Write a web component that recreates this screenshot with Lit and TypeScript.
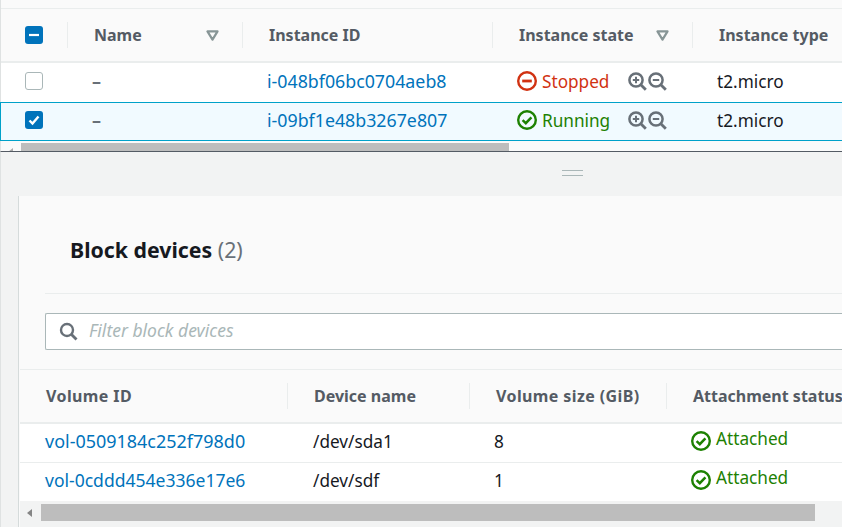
import { LitElement, css, html, svg } from "lit";
import { customElement } from "lit/decorators.js";

const stopped = html`<svg class="ico" viewBox="0 0 20 20" fill="none" stroke="#d13212" stroke-width="2.4">
  <circle cx="10" cy="10" r="8.8"></circle><path d="M5.2 10h9.6" stroke-width="2.8"></path></svg>`;
const okIcon = html`<svg class="ico" viewBox="0 0 20 20" fill="none" stroke="#1d8102" stroke-width="2.4">
  <circle cx="10" cy="10" r="8.8"></circle><path d="M5.6 10.2l3.2 3 5.6-5.8" stroke-width="2.5"></path></svg>`;

const lens = (plus: boolean) => html`<svg class="zoom" viewBox="0 0 19 19" fill="none" stroke="#687078" stroke-width="2.5">
  <circle cx="8" cy="8" r="6.6"></circle><path d="M12.8 12.8l5 5" stroke-width="2.8"></path>
  <path d="M4.8 8h6.4" stroke-width="2"></path>
  ${plus ? svg`<path d="M8 4.8v6.4" stroke-width="2"></path>` : ""}</svg>`;

const sortIcon = html`<svg class="sort" viewBox="0 0 14 12"><path d="M1.5 1.5h11L7 10.5z" fill="none" stroke="#879596" stroke-width="2.4" stroke-linejoin="round"></path></svg>`;

const instances = [
  { id: "i-048bf06bc0704aeb8", state: "Stopped", selected: false },
  { id: "i-09bf1e48b3267e807", state: "Running", selected: true },
];

const volumes = [
  { id: "vol-0509184c252f798d0", device: "/dev/sda1", size: "8", idSize: 17.98 },
  { id: "vol-0cddd454e336e17e6", device: "/dev/sdf", size: "1", idSize: 17.54 },
];

@customElement("app-root")
export class AppRoot extends LitElement {
  static styles = css`
    :host {
      display: block;
      width: 842px;
      height: 527px;
      overflow: hidden;
      background: #f2f3f3;
      font-family: "Noto Sans", "Open Sans", sans-serif;
      font-size: 17.2px;
      color: #16191f;
    }
    .top {
      height: 152px;
      background: #fafafa;
      border-bottom: 1px solid #545b64;
      border-left: 1px solid #dfe2e2;
      padding-top: 8px;
      box-sizing: border-box;
    }
    .lower {
      border-left: 1px solid #dfe2e2;
    }
    .grid-top {
      display: grid;
      grid-template-columns: 66px 175px 250px 200px 150px;
      align-items: center;
    }
    .grid-bottom {
      display: grid;
      grid-template-columns: 267px 182px 197px 176px;
      align-items: center;
    }
    .head {
      height: 55px;
      background: #fafafa;
      border-top: 1px solid #eaeded;
      border-bottom: 2px solid #eaeded;
      box-sizing: border-box;
      font-size: 16px;
      font-weight: 700;
      color: #545b64;
      white-space: nowrap;
    }
    .hcell {
      display: flex;
      align-items: center;
      justify-content: space-between;
      height: 26px;
      padding: 0 23px 0 26px;
      border-left: 1px solid #eaeded;
      overflow: hidden;
    }
    .hcell.first {
      border-left: 0;
      padding: 0 0 0 24px;
    }
    .wide {
      letter-spacing: 0.4px;
    }
    .row {
      height: 39px;
      background: #fff;
      padding-bottom: 3px;
      box-sizing: border-box;
      white-space: nowrap;
    }
    .row.selected {
      margin-left: -1px;
      background: #f1faff;
      border: 1px solid #00a1c9;
      border-right: 0;
    }
    .cell {
      padding-left: 25px;
      display: flex;
      align-items: center;
    }
    .cell.first {
      padding-left: 24px;
    }
    a {
      color: #0073bb;
      font-size: 17.8px;
      text-decoration: none;
    }
    .box {
      width: 18px;
      height: 18px;
      border-radius: 3px;
      box-sizing: border-box;
      background: #0073bb;
      display: flex;
      align-items: center;
      justify-content: center;
    }
    .box.off {
      background: #fff;
      border: 1px solid #aab7b8;
    }
    .box svg {
      width: 14px;
      height: 14px;
    }
    .dash {
      color: #687078;
      font-size: 18px;
      font-weight: 700;
    }
    .ico {
      width: 20px;
      height: 20px;
      flex: none;
      margin-right: 5px;
    }
    .zoom {
      width: 19px;
      height: 19px;
      flex: none;
      margin-right: 1px;
    }
    .sort {
      width: 13px;
      height: 11px;
      flex: none;
    }
    .state {
      width: 86px;
    }
    .stopped {
      color: #d13212;
    }
    .ok {
      color: #1d8102;
    }
    .bar {
      display: flex;
      align-items: flex-start;
      height: 10px;
      padding-top: 2px;
      background: #fafafa;
      box-sizing: border-box;
      overflow: hidden;
    }
    .bar b {
      flex: none;
      width: 0;
      height: 0;
      margin: 5px 0 0 7px;
      border: 4px solid transparent;
      border-left: 0;
      border-right: 5px solid #aaa;
    }
    .thumb {
      height: 8px;
      background: #bdbdbd;
    }
    .handle {
      height: 44px;
      display: flex;
      align-items: center;
      justify-content: center;
      padding: 0 0 2px 301px;
      box-sizing: border-box;
    }
    .handle i {
      display: block;
      width: 21px;
      height: 4px;
      border-top: 1px solid #aab7b8;
      border-bottom: 1px solid #aab7b8;
    }
    .panel {
      margin-left: 17px;
      height: 331px;
      background: #fafafa;
      border-left: 1px solid #d5dbdb;
      padding-left: 1px;
      box-sizing: border-box;
    }
    .panel-head {
      margin-left: 25px;
      height: 98px;
      border-bottom: 1px solid #eaeded;
      box-sizing: border-box;
      display: flex;
      align-items: center;
      padding: 11px 0 0 25px;
    }
    h2 {
      margin: 0;
      font-size: 21.3px;
      font-weight: 700;
      line-height: 28px;
      white-space: nowrap;
    }
    h2 span {
      font-weight: 400;
      color: #687078;
    }
    .filter {
      margin: 19px 0 19px 25px;
      height: 37px;
      background: #fff;
      border: 1px solid #aab7b8;
      border-right: 0;
      border-radius: 2px 0 0 2px;
      box-sizing: border-box;
      display: flex;
      align-items: center;
      padding-left: 13px;
      gap: 11px;
      font-size: 17.5px;
      font-style: italic;
      color: #aab7b8;
    }
    .filter span {
      margin-top: -3px;
    }
    .filter svg {
      width: 19px;
      height: 19px;
    }
    .b-row {
      height: 39px;
      background: #fff;
      border-bottom: 1px solid #eaeded;
      padding-bottom: 4px;
      box-sizing: border-box;
      white-space: nowrap;
    }
    .b-row.last {
      height: 38px;
      border-bottom: 0;
    }
    .b-row .cell {
      padding-left: 26px;
    }
    .b-row .cell.first {
      padding-left: 25px;
    }
    .b-row .cell.size {
      padding-left: 25px;
    }
    .b-row .cell.status {
      padding-left: 25px;
    }
    .b-row .status span {
      margin-top: -5px;
    }
    .b-bar {
      display: flex;
      height: 26px;
      background: #f2f3f3;
      padding-top: 3px;
      box-sizing: border-box;
    }
    .b-bar .arrow {
      width: 21px;
      height: 17px;
      display: flex;
      align-items: center;
      padding-left: 7px;
      box-sizing: border-box;
    }
    .b-bar .arrow b {
      border: 4px solid transparent;
      border-left: 0;
      border-right: 5px solid #858585;
    }
    .b-bar .thumb {
      height: 17px;
      width: 774px;
    }
  `;

  render() {
    return html`
      <div class="top">
        <div class="grid-top head">
          <div class="hcell first">
            <div class="box">
              <svg viewBox="0 0 14 14"><path d="M2 7h10" stroke="#fff" stroke-width="2.2"></path></svg>
            </div>
          </div>
          <div class="hcell">Name ${sortIcon}</div>
          <div class="hcell">Instance ID</div>
          <div class="hcell">Instance state ${sortIcon}</div>
          <div class="hcell">Instance type</div>
        </div>
        ${instances.map(
          (r) => html`<div class="grid-top row ${r.selected ? "selected" : ""}">
            <div class="cell first">
              ${r.selected
                ? html`<div class="box">
                    <svg viewBox="0 0 14 14" fill="none"><path d="M2.5 7.5l3 3 6-7" stroke="#fff" stroke-width="2.4"></path></svg>
                  </div>`
                : html`<div class="box off"></div>`}
            </div>
            <div class="cell"><span class="dash">–</span></div>
            <div class="cell"><a href="#">${r.id}</a></div>
            <div class="cell">
              ${r.state === "Stopped" ? stopped : okIcon}
              <span class="state ${r.state === "Stopped" ? "stopped" : "ok"}">${r.state}</span>
              ${lens(true)}${lens(false)}
            </div>
            <div class="cell">t2.micro</div>
          </div>`
        )}
        <div class="bar">
          <b></b>
          <div class="thumb" style="margin-left:8px;width:488px"></div>
        </div>
      </div>
      <div class="lower">
        <div class="handle"><i></i></div>
        <div class="panel">
          <div class="panel-head"><h2>Block devices <span>(2)</span></h2></div>
          <div class="filter">
            <svg viewBox="0 0 19 19" fill="none" stroke="#687078">
              <circle cx="8" cy="8" r="6" stroke-width="2.4"></circle>
              <path d="M12.5 12.5l5 5" stroke-width="2.8"></path>
            </svg>
            <span>Filter block devices</span>
          </div>
          <div class="grid-bottom head">
            <div class="hcell first wide" style="padding-left:26px">Volume ID</div>
            <div class="hcell">Device name</div>
            <div class="hcell wide">Volume size (GiB)</div>
            <div class="hcell" style="padding-right:0">Attachment status</div>
          </div>
          ${volumes.map(
            (v, i) => html`<div class="grid-bottom b-row ${i === volumes.length - 1 ? "last" : ""}">
              <div class="cell first"><a href="#" style="font-size:${v.idSize}px">${v.id}</a></div>
              <div class="cell">${v.device}</div>
              <div class="cell size">${v.size}</div>
              <div class="cell status ok">${okIcon}<span>Attached</span></div>
            </div>`
          )}
          <div class="b-bar">
            <div class="arrow"><b></b></div>
            <div class="thumb"></div>
          </div>
        </div>
      </div>
    `;
  }
}
